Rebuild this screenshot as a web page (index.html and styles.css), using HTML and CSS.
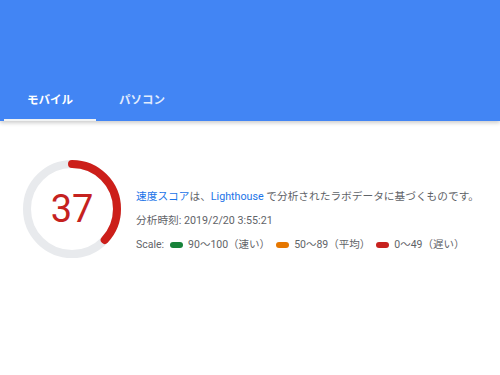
FILE: index.html
```html
<!DOCTYPE html>
<html lang="ja">
<head>
  <meta charset="UTF-8">
  <title>PageSpeed Insights</title>
  <link rel="stylesheet" href="styles.css">
</head>
<body>

  <!-- Header with tabs -->
  <div class="header">
    <div class="tabs">
      <div class="tab active">モバイル</div>
      <div class="tab">パソコン</div>
    </div>
  </div>

  <!-- Score section -->
  <div class="summary">
    <div class="gauge">
      <svg width="100" height="100" viewBox="0 0 100 100">
        <circle cx="50" cy="50" r="45" fill="none" stroke="#e8eaed" stroke-width="8"/>
        <circle cx="50" cy="50" r="45" fill="none" stroke="#cc1f1a" stroke-width="8"
          stroke-linecap="round" stroke-dasharray="104.6 282.7" transform="rotate(-90 50 50)"/>
      </svg>
      <div class="gauge-score">37</div>
    </div>
    <div class="info">
      <p class="desc"><span class="link">速度スコア</span>は、<span class="link">Lighthouse</span> で分析されたラボデータに基づくものです。</p>
      <p class="time">分析時刻: 2019/2/20 3:55:21</p>
      <p class="scale">
        Scale:
        <span class="pill pass"></span>90〜100（速い）
        <span class="pill average"></span>50〜89（平均）
        <span class="pill fail"></span>0〜49（遅い）
      </p>
    </div>
  </div>

</body>
</html>
```

FILE: styles.css
```css
* {
  margin: 0;
  padding: 0;
  box-sizing: border-box;
}

body {
  font-family: Roboto, "Noto Sans CJK JP", sans-serif;
  background-color: #fff;
  color: #5f6368;
}

.header {
  height: 121px;
  background-color: #4285f4;
  display: flex;
  align-items: flex-end;
  box-shadow: 0 2px 4px rgba(0, 0, 0, 0.2);
}

.tabs {
  display: flex;
  padding-left: 4px;
}

.tab {
  width: 92px;
  height: 40px;
  display: flex;
  align-items: center;
  justify-content: center;
  padding-bottom: 2px;
  font-size: 11.5px;
  font-weight: bold;
  color: rgba(255, 255, 255, 0.85);
  border-bottom: 2px solid transparent;
}

.tab.active {
  color: #fff;
  border-bottom-color: #f1f3f4;
}

.summary {
  display: flex;
  align-items: flex-start;
  padding: 38px 0 0 22px;
}

.gauge {
  position: relative;
  width: 100px;
  height: 100px;
}

.gauge svg {
  display: block;
}

.gauge-score {
  position: absolute;
  inset: 0;
  display: flex;
  align-items: center;
  justify-content: center;
  font-size: 38px;
  color: #c5221f;
}

.info {
  margin: 31px 0 0 14px;
  font-size: 10.7px;
  line-height: 13px;
}

.info p {
  margin-bottom: 11px;
}

.info p:last-child {
  margin-bottom: 0;
}

.link {
  color: #1a73e8;
}

.scale {
  display: flex;
  align-items: center;
  font-size: 10.5px;
}

.pill {
  display: inline-block;
  width: 13px;
  height: 6px;
  border-radius: 3px;
  margin: 0 5px 0 6px;
}

.pill.pass { background-color: #178239; }
.pill.average { background-color: #e67700; }
.pill.fail { background-color: #c7221f; }
```
